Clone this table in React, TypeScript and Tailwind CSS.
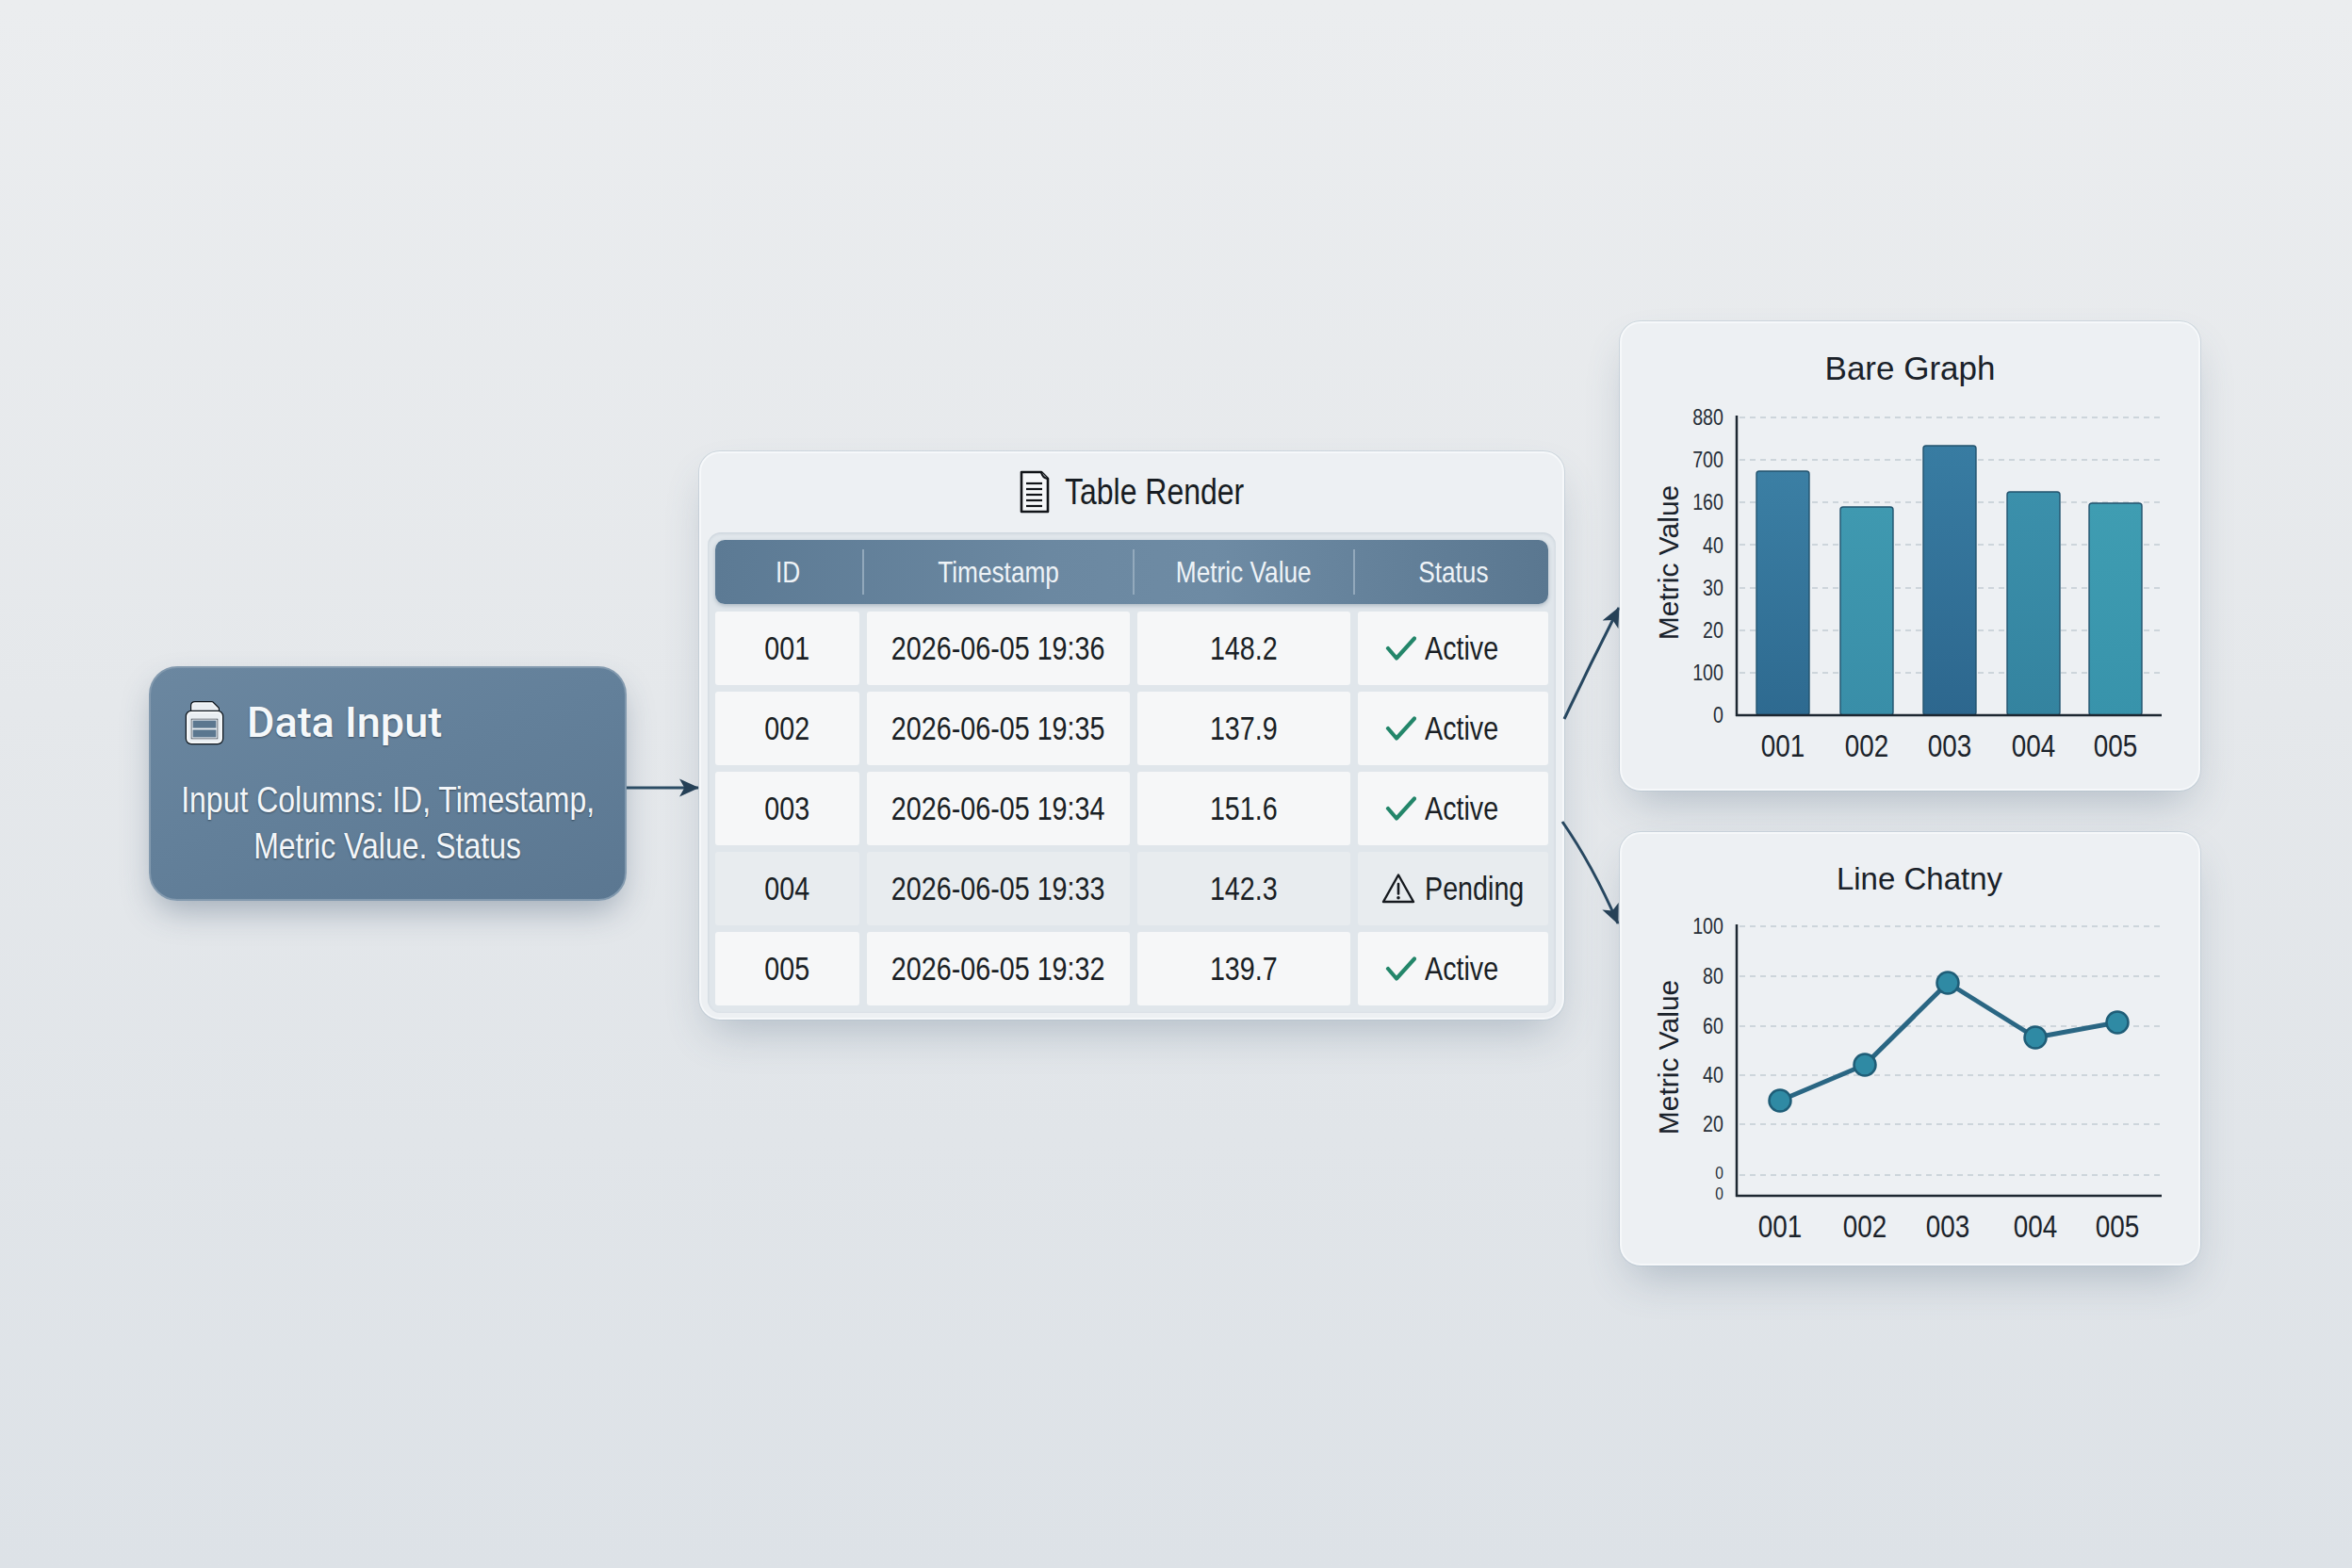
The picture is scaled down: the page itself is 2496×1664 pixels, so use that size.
import React from "react";

const SANS = "font-['Liberation_Sans',Arial,sans-serif]";
const SVG_SANS = "'Liberation Sans', Arial, sans-serif";
const SQ = "inline-block whitespace-nowrap scale-x-[0.82]";

const rows = [
  { id: "001", ts: "2026-06-05 19:36", v: "148.2", s: "Active" },
  { id: "002", ts: "2026-06-05 19:35", v: "137.9", s: "Active" },
  { id: "003", ts: "2026-06-05 19:34", v: "151.6", s: "Active" },
  { id: "004", ts: "2026-06-05 19:33", v: "142.3", s: "Pending" },
  { id: "005", ts: "2026-06-05 19:32", v: "139.7", s: "Active" },
];

function DbIcon() {
  return (
    <svg width="44" height="48" viewBox="0 0 44 48" className="shrink-0">
      <path d="M9 14 V6 Q9 3 12 3 H30 L36 9 V14" fill="#e9eef2" stroke="#0f161d" strokeWidth="4" strokeLinejoin="round" />
      <path d="M9 14 V6 Q9 3 12 3 H30 L36 9 V14" fill="#e9eef2" stroke="#f4f7f9" strokeWidth="1.6" strokeLinejoin="round" />
      <rect x="4" y="13" width="36" height="32" rx="4" fill="#e9eef2" stroke="#0f161d" strokeWidth="4.5" />
      <rect x="4" y="13" width="36" height="32" rx="4" fill="#e9eef2" stroke="#f4f7f9" strokeWidth="2" />
      <rect x="9" y="21" width="26" height="19" fill="#5b778f" stroke="#1a2430" strokeWidth="2.4" />
      <rect x="9" y="21" width="26" height="19" fill="#5b778f" stroke="#eef2f5" strokeWidth="1.2" />
      <line x1="9" y1="30.5" x2="35" y2="30.5" stroke="#eef2f5" strokeWidth="1.8" />
    </svg>
  );
}

function DocIcon() {
  return (
    <svg width="36" height="48" viewBox="0 0 36 48" className="shrink-0">
      <path d="M5 3 H26 L33 10 V45 H5 Z" fill="#f5f7f9" stroke="#111418" strokeWidth="2.6" strokeLinejoin="round" />
      <path d="M26 3 Q27 9 33 10" fill="#e3e7eb" stroke="#111418" strokeWidth="2" strokeLinejoin="round" />
      <line x1="10" y1="15" x2="27" y2="15" stroke="#111418" strokeWidth="2.2" />
      <line x1="10" y1="21" x2="27" y2="21" stroke="#111418" strokeWidth="2.2" />
      <line x1="10" y1="27" x2="27" y2="27" stroke="#111418" strokeWidth="2.2" />
      <line x1="10" y1="33" x2="27" y2="33" stroke="#111418" strokeWidth="2.2" />
      <line x1="10" y1="39" x2="27" y2="39" stroke="#111418" strokeWidth="2.2" />
    </svg>
  );
}

function Check() {
  return (
    <svg width="33" height="26" viewBox="0 0 33 26" className="shrink-0">
      <path d="M3 13 L12 23.5 L31 2.5" fill="none" stroke="#23866a" strokeWidth="4.2" strokeLinecap="round" strokeLinejoin="round" />
    </svg>
  );
}

function Warn() {
  return (
    <svg width="36" height="36" viewBox="0 0 36 36" className="shrink-0">
      <path d="M18 3.5 L34 32 H2 Z" fill="none" stroke="#15191e" strokeWidth="2.4" strokeLinejoin="round" />
      <line x1="18" y1="13" x2="18" y2="23.5" stroke="#15191e" strokeWidth="2.6" strokeLinecap="round" />
      <circle cx="18" cy="27.8" r="1.8" fill="#15191e" />
    </svg>
  );
}

function DataInput() {
  return (
    <div className="mt-[707px] h-[249px] w-[507px] shrink-0 rounded-[30px] border-2 border-[#8299ae] bg-[linear-gradient(160deg,#6b87a0_0%,#63809a_45%,#5b7791_100%)] shadow-[0_16px_34px_-6px_rgba(55,80,105,0.38)]">
      <div className="mt-[32px] flex h-[52px] items-center gap-[23px] pl-[35px]">
        <DbIcon />
        <span className="font-['Roboto',sans-serif] text-[45px] font-medium leading-[52px] text-[#f5f8fa] [text-shadow:0_1px_2px_rgba(10,20,30,0.45)]">
          Data Input
        </span>
      </div>
      <div className={`${SANS} mt-[31px] text-[39px] leading-[49px] text-[#f3f6f9] [text-shadow:0_1px_2px_rgba(10,20,30,0.5)]`}>
        <div className="flex justify-center">
          <span className={SQ}>Input Columns: ID, Timestamp,</span>
        </div>
        <div className="flex justify-center">
          <span className={SQ}>Metric Value. Status</span>
        </div>
      </div>
    </div>
  );
}

function TableCard() {
  return (
    <div className="mt-[479px] h-[603px] w-[918px] shrink-0 rounded-[22px] border-2 border-[#f6f8fa] bg-[#edf0f3] px-[7px] pt-[17px] shadow-[0_0_0_1px_rgba(175,190,205,0.45),0_22px_46px_-12px_rgba(70,95,120,0.32)]">
      <div className="flex h-[48px] items-center justify-center gap-[15px] pl-[38px]">
        <DocIcon />
        <span className={`${SANS} ${SQ} origin-left text-[39px] leading-[48px] text-[#171c22]`}>Table Render</span>
      </div>
      <div className="mt-[19px] rounded-[14px] bg-[#e0e6eb] p-[8px] shadow-[inset_0_1px_3px_rgba(120,140,160,0.25)]">
        <div className="grid h-[68px] grid-cols-[153px_8px_279px_8px_226px_8px_202px] items-center rounded-[10px] bg-[linear-gradient(90deg,#5c7a94_0%,#6b88a1_40%,#6e8ba4_60%,#5a7790_100%)] shadow-[0_2px_4px_rgba(60,85,110,0.3)]">
          {["ID", "|", "Timestamp", "|", "Metric Value", "|", "Status"].map((h, i) =>
            h === "|" ? (
              <div key={i} className="flex h-full items-center justify-center">
                <div className="h-[48px] w-[2px] bg-[#9db1c3] opacity-80" />
              </div>
            ) : (
              <div key={i} className={`${SANS} flex justify-center text-[32px] leading-none text-[#eef3f7]`}>
                <span className={SQ}>{h}</span>
              </div>
            )
          )}
        </div>
        <div className="mt-[8px] flex flex-col gap-[7px]">
          {rows.map((r) => {
            const bg = r.s === "Pending" ? "bg-[#e8ecef]" : "bg-[#f6f7f8]";
            return (
              <div key={r.id} className={`${SANS} grid h-[78px] grid-cols-[153px_279px_226px_202px] gap-x-[8px] text-[35px] text-[#1a1f25]`}>
                <div className={`${bg} flex items-center justify-center rounded-[3px]`}>
                  <span className={SQ}>{r.id}</span>
                </div>
                <div className={`${bg} flex items-center justify-center rounded-[3px]`}>
                  <span className={SQ}>{r.ts}</span>
                </div>
                <div className={`${bg} flex items-center justify-center rounded-[3px]`}>
                  <span className={SQ}>{r.v}</span>
                </div>
                <div className={`${bg} flex items-center rounded-[3px] ${r.s === "Pending" ? "gap-[10px] pl-[25px]" : "gap-[9px] pl-[29px]"}`}>
                  {r.s === "Pending" ? <Warn /> : <Check />}
                  <span className={`${SQ} origin-left`}>{r.s}</span>
                </div>
              </div>
            );
          })}
        </div>
      </div>
    </div>
  );
}

function Marker({ id }: { id: string }) {
  return (
    <marker id={id} viewBox="0 0 10 10" refX="9.5" refY="5" markerWidth="7" markerHeight="7" orient="auto">
      <path d="M0 0.5 L10 5 L0 9.5 L2.5 5 Z" fill="#243f55" />
    </marker>
  );
}

function InputArrow() {
  return (
    <svg width="77" height="30" className="mt-[821px] shrink-0 overflow-visible">
      <defs>
        <Marker id="m0" />
      </defs>
      <line x1="0" y1="15" x2="76" y2="15" stroke="#2c4d65" strokeWidth="3" markerEnd="url(#m0)" />
    </svg>
  );
}

function Connector() {
  return (
    <svg width="59" height="400" className="mt-[600px] shrink-0 overflow-visible">
      <defs>
        <Marker id="m1" />
        <Marker id="m2" />
      </defs>
      <path d="M0 163 Q28 104 58 45" fill="none" stroke="#274760" strokeWidth="3" markerEnd="url(#m1)" />
      <path d="M-2 272 Q30 318 57 380" fill="none" stroke="#274760" strokeWidth="3" markerEnd="url(#m2)" />
    </svg>
  );
}

const cardCls =
  "w-[616px] rounded-[22px] border-2 border-[#f6f8fa] bg-[#edf0f3] shadow-[0_0_0_1px_rgba(175,190,205,0.45),0_22px_46px_-12px_rgba(70,95,120,0.32)]";

function YLabel({ y, t, size = 24 }: { y: number; t: string; size?: number }) {
  return (
    <text transform={`translate(1829 ${y}) scale(0.82 1)`} textAnchor="end" dominantBaseline="central" fontFamily={SVG_SANS} fontSize={size} fill="#262e37">
      {t}
    </text>
  );
}

function XLabel({ x, y, t }: { x: number; y: number; t: string }) {
  return (
    <text transform={`translate(${x} ${y}) scale(0.82 1)`} textAnchor="middle" dominantBaseline="central" fontFamily={SVG_SANS} fontSize="34" fill="#1b232b">
      {t}
    </text>
  );
}

function BarCard() {
  const bars = [
    { c: 1892, t: 500, a: "#3b7fa4", b: "#2e6a90" },
    { c: 1981, t: 538, a: "#3f99b0", b: "#398ea8" },
    { c: 2069, t: 473, a: "#387ca2", b: "#2d678e" },
    { c: 2158, t: 522, a: "#3b90ab", b: "#34839f" },
    { c: 2245, t: 534, a: "#3f9db2", b: "#3893ab" },
  ];
  const grid = [443, 488, 533, 578, 624, 669, 714];
  const labels = ["880", "700", "160", "40", "30", "20", "100", "0"];
  return (
    <div className={`${cardCls} h-[498px]`}>
      <div className={`${SANS} box-border h-[70px] pt-[26px] text-center text-[35px] leading-[44px] text-[#1a2129]`}>Bare Graph</div>
      <svg width="612" height="424" className="block">
        <defs>
          {bars.map((b, i) => (
            <linearGradient key={i} id={`bg${i}`} x1="0" y1="0" x2="0" y2="1">
              <stop offset="0" stopColor={b.a} />
              <stop offset="1" stopColor={b.b} />
            </linearGradient>
          ))}
        </defs>
        <g transform="translate(-1721 -413)">
          {grid.map((y) => (
            <line key={y} x1="1846" y1={y} x2="2294" y2={y} stroke="#c2cbd3" strokeWidth="1.5" strokeDasharray="6 5" />
          ))}
          {labels.map((l, i) => (
            <YLabel key={i} y={443 + i * 45.14} t={l} />
          ))}
          {bars.map((b, i) => (
            <rect key={i} x={b.c - 28} y={b.t} width="56" height={759 - b.t} rx="3" fill={`url(#bg${i})`} stroke="#22536e" strokeWidth="1.4" />
          ))}
          <line x1="1843" y1="441" x2="1843" y2="760" stroke="#1d2731" strokeWidth="2.5" />
          <line x1="1842" y1="759" x2="2294" y2="759" stroke="#1d2731" strokeWidth="2.5" />
          {bars.map((b, i) => (
            <XLabel key={i} x={b.c} y={792} t={`00${i + 1}`} />
          ))}
          <text transform="translate(1770 597) rotate(-90)" textAnchor="middle" dominantBaseline="central" fontFamily={SVG_SANS} fontSize="30" fill="#19222b">
            Metric Value
          </text>
        </g>
      </svg>
    </div>
  );
}

function LineCard() {
  const pts = [
    [1889, 1168],
    [1979, 1130],
    [2067, 1043],
    [2160, 1101],
    [2247, 1085],
  ];
  const grid = [983, 1036, 1089, 1141, 1193, 1247];
  const labels = ["100", "80", "60", "40", "20"];
  return (
    <div className={`${cardCls} h-[460px]`}>
      <div className={`${SANS} box-border h-[70px] pl-[20px] pt-[26px] text-center text-[33px] leading-[44px] text-[#1a2129]`}>Line Chatny</div>
      <svg width="612" height="386" className="block">
        <g transform="translate(-1721 -955)">
          {grid.map((y) => (
            <line key={y} x1="1846" y1={y} x2="2294" y2={y} stroke="#c2cbd3" strokeWidth="1.5" strokeDasharray="6 5" />
          ))}
          {labels.map((l, i) => (
            <YLabel key={i} y={grid[i]} t={l} />
          ))}
          <YLabel y={1244} t="0" size={19} />
          <YLabel y={1266} t="0" size={19} />
          <line x1="1843" y1="981" x2="1843" y2="1270" stroke="#1d2731" strokeWidth="2.5" />
          <line x1="1842" y1="1269" x2="2294" y2="1269" stroke="#1d2731" strokeWidth="2.5" />
          <polyline points={pts.map((p) => p.join(",")).join(" ")} fill="none" stroke="#2a6683" strokeWidth="5" strokeLinejoin="round" />
          {pts.map((p, i) => (
            <circle key={i} cx={p[0]} cy={p[1]} r="11.5" fill="#2f8aa4" stroke="#1f5d77" strokeWidth="2.5" />
          ))}
          {pts.map((p, i) => (
            <XLabel key={i} x={p[0]} y={1302} t={`00${i + 1}`} />
          ))}
          <text transform="translate(1770 1122) rotate(-90)" textAnchor="middle" dominantBaseline="central" fontFamily={SVG_SANS} fontSize="30" fill="#19222b">
            Metric Value
          </text>
        </g>
      </svg>
    </div>
  );
}

export default function App() {
  return (
    <div className="flex h-[1664px] w-[2496px] items-start overflow-hidden bg-[linear-gradient(180deg,#ebedef_0%,#e5e8eb_45%,#dde2e7_100%)] pl-[158px]">
      <DataInput />
      <InputArrow />
      <TableCard />
      <Connector />
      <div className="mt-[341px] flex w-[616px] shrink-0 flex-col gap-[44px]">
        <BarCard />
        <LineCard />
      </div>
    </div>
  );
}
